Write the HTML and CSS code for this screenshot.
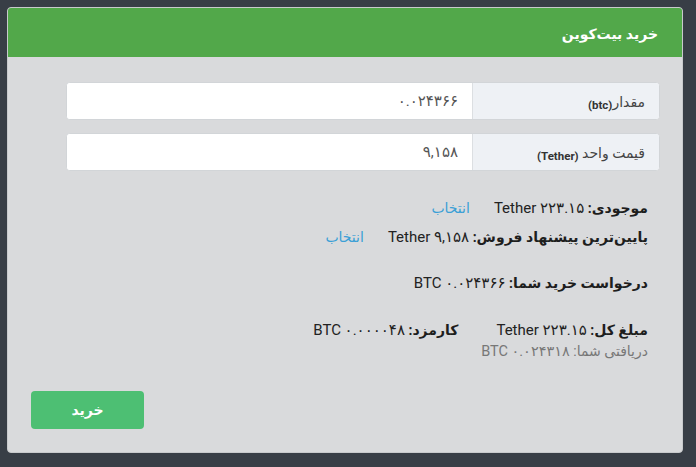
FILE: index.html
```html
<!DOCTYPE html>
<html lang="fa">
<head>
<meta charset="utf-8">
<title>خرید بیت‌کوین</title>
<link rel="stylesheet" href="styles.css">
</head>
<body>
<div class="card" dir="rtl">
  <div class="card-header">خرید بیت‌کوین</div>
  <div class="card-body">
    <div class="form">
      <div class="input-group">
        <label class="addon">مقدار<span class="unit" dir="ltr">(btc)</span></label>
        <input class="field" type="text" value="۰.۰۲۴۳۶۶">
      </div>
      <div class="input-group">
        <label class="addon">قیمت واحد <span class="unit" dir="ltr">(Tether)</span></label>
        <input class="field" type="text" value="۹,۱۵۸">
      </div>
      <div class="info">
        <div class="row r1"><b>موجودی:</b> <span class="val" dir="ltr">Tether ۲۲۳.۱۵</span><a class="pick" href="#">انتخاب</a></div>
        <div class="row r2"><b>پایین‌ترین پیشنهاد فروش:</b> <span class="val" dir="ltr">Tether ۹,۱۵۸</span><a class="pick" href="#">انتخاب</a></div>
        <div class="row r3"><b>درخواست خرید شما:</b> <span class="val" dir="ltr">BTC ۰.۰۲۴۳۶۶</span></div>
        <div class="row r4"><b>مبلغ کل:</b> <span class="val" dir="ltr">Tether ۲۲۳.۱۵</span><b class="fee">کارمزد:</b> <span class="val" dir="ltr">BTC ۰.۰۰۰۰۴۸</span></div>
        <div class="row r5">دریافتی شما: <span class="val" dir="ltr">BTC ۰.۰۲۴۳۱۸</span></div>
      </div>
    </div>
    <div class="actions"><button class="buy" type="button">خرید</button></div>
  </div>
</div>
</body>
</html>
```
FILE: styles.css
```css
html, body {
  margin: 0;
  padding: 0;
}
body {
  background: #383e46;
  padding: 7px;
  font-family: Roboto, "DejaVu Sans", sans-serif;
}
.card {
  width: 676px;
  height: 446px;
  box-sizing: border-box;
  border: 1px solid #c8cacc;
  border-radius: 4px;
  background: #d9dadc;
  overflow: hidden;
  direction: rtl;
}
.card-header {
  height: 49px;
  line-height: 52px;
  background: #52a84a;
  color: #fff;
  font-weight: bold;
  font-size: 14px;
  padding-right: 24px;
}
.card-body {
  padding: 25px 22px 0 23px;
}
.form {
  width: 594px;
}
.input-group {
  display: flex;
  height: 38px;
  box-sizing: border-box;
  border: 1px solid #d2d5d8;
  border-radius: 4px;
  overflow: hidden;
  margin-bottom: 13px;
  background: #fff;
}
.addon {
  display: block;
  width: 187px;
  flex: none;
  box-sizing: border-box;
  background: #eef1f5;
  border-left: 1px solid #dcdfe2;
  padding-right: 14px;
  line-height: 38px;
  font-size: 14px;
  color: #444;
  white-space: nowrap;
}
.unit {
  font-size: 11.5px;
  font-weight: bold;
  color: #333;
  vertical-align: -2px;
}
.field {
  flex: 1;
  border: 0;
  outline: 0;
  margin: 0;
  padding: 0 14px;
  font-family: Roboto, "DejaVu Sans", sans-serif;
  font-size: 15px;
  color: #555;
  background: #fff;
  direction: rtl;
  text-align: right;
}
.info {
  margin-top: 23px;
  padding-right: 12px;
  font-size: 14px;
  color: #222;
}
.row {
  line-height: 29px;
  white-space: nowrap;
}
.row b {
  font-weight: bold;
  color: #1e1e1e;
}
.val {
  font-size: 15px;
}
.pick {
  color: #3a9fd6;
  text-decoration: none;
  margin-right: 24px;
}
.r3 {
  margin-top: 17px;
}
.r4 {
  margin-top: 19px;
  line-height: 26px;
}
.fee {
  margin-right: 38px;
}
.r5 {
  line-height: 16px;
  color: #777;
  font-size: 14px;
}
.r5 .val {
  font-size: 14.5px;
}
.actions {
  text-align: left;
  margin-top: 31px;
}
.buy {
  width: 113px;
  height: 38px;
  border: 0;
  border-radius: 4px;
  background: #4dbf73;
  color: #fff;
  font-family: Roboto, "DejaVu Sans", sans-serif;
  font-weight: bold;
  font-size: 14px;
  cursor: pointer;
}
```
